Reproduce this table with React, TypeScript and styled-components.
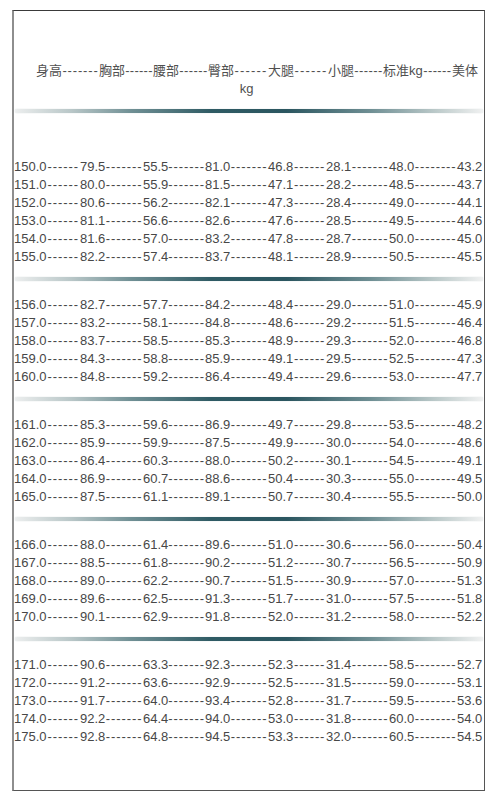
import { createGlobalStyle, styled } from 'styled-components';

type Section = string[][];

const sections: Section[] = [
  [
    ['150.0', '79.5', '55.5', '81.0', '46.8', '28.1', '48.0', '43.2'],
    ['151.0', '80.0', '55.9', '81.5', '47.1', '28.2', '48.5', '43.7'],
    ['152.0', '80.6', '56.2', '82.1', '47.3', '28.4', '49.0', '44.1'],
    ['153.0', '81.1', '56.6', '82.6', '47.6', '28.5', '49.5', '44.6'],
    ['154.0', '81.6', '57.0', '83.2', '47.8', '28.7', '50.0', '45.0'],
    ['155.0', '82.2', '57.4', '83.7', '48.1', '28.9', '50.5', '45.5'],
  ],
  [
    ['156.0', '82.7', '57.7', '84.2', '48.4', '29.0', '51.0', '45.9'],
    ['157.0', '83.2', '58.1', '84.8', '48.6', '29.2', '51.5', '46.4'],
    ['158.0', '83.7', '58.5', '85.3', '48.9', '29.3', '52.0', '46.8'],
    ['159.0', '84.3', '58.8', '85.9', '49.1', '29.5', '52.5', '47.3'],
    ['160.0', '84.8', '59.2', '86.4', '49.4', '29.6', '53.0', '47.7'],
  ],
  [
    ['161.0', '85.3', '59.6', '86.9', '49.7', '29.8', '53.5', '48.2'],
    ['162.0', '85.9', '59.9', '87.5', '49.9', '30.0', '54.0', '48.6'],
    ['163.0', '86.4', '60.3', '88.0', '50.2', '30.1', '54.5', '49.1'],
    ['164.0', '86.9', '60.7', '88.6', '50.4', '30.3', '55.0', '49.5'],
    ['165.0', '87.5', '61.1', '89.1', '50.7', '30.4', '55.5', '50.0'],
  ],
  [
    ['166.0', '88.0', '61.4', '89.6', '51.0', '30.6', '56.0', '50.4'],
    ['167.0', '88.5', '61.8', '90.2', '51.2', '30.7', '56.5', '50.9'],
    ['168.0', '89.0', '62.2', '90.7', '51.5', '30.9', '57.0', '51.3'],
    ['169.0', '89.6', '62.5', '91.3', '51.7', '31.0', '57.5', '51.8'],
    ['170.0', '90.1', '62.9', '91.8', '52.0', '31.2', '58.0', '52.2'],
  ],
  [
    ['171.0', '90.6', '63.3', '92.3', '52.3', '31.4', '58.5', '52.7'],
    ['172.0', '91.2', '63.6', '92.9', '52.5', '31.5', '59.0', '53.1'],
    ['173.0', '91.7', '64.0', '93.4', '52.8', '31.7', '59.5', '53.6'],
    ['174.0', '92.2', '64.4', '94.0', '53.0', '31.8', '60.0', '54.0'],
    ['175.0', '92.8', '64.8', '94.5', '53.3', '32.0', '60.5', '54.5'],
  ],
];

// header labels, how many dashes follow each, and how far apart they are set
const headers = ['身高', '胸部', '腰部', '臀部', '大腿', '小腿', '标准kg', '美体'];
const headerDashes = [7, 6, 6, 6, 6, 6, 6];
const headerSpacing = [0.85, 0.25, 0.4, 1.2, 1.2, 0.4, 0.4];
const rowDashes = [6, 7, 7, 7, 6, 7, 8];

const GlobalStyle = createGlobalStyle`
  body {
    margin: 0;
    background: #fff;
    font-family: "Liberation Sans", "Noto Sans CJK SC", sans-serif;
  }
`;

const Frame = styled.div`
  box-sizing: border-box;
  width: 473px;
  height: 781px;
  margin: 10px 0 0 12px;
  border: 1px solid #555;
  border-top-color: #3a3a3a;
  border-left: 2px solid #8e8e8e;
  background: #fff;
  color: #474747;
  font-size: 13px;
  line-height: 18px;
`;

const Header = styled.div`
  padding-top: 51px;
  color: #505050;
`;

const HeaderLine = styled.div`
  display: grid;
  grid-template-columns: 63px 54px 55px 60px 60px 55px 69px 1fr;
  padding-left: 22px;
`;

const Unit = styled.div`
  text-align: center;
  padding-right: 5px;
`;

const Cell = styled.div`
  display: flex;
  white-space: nowrap;
`;

const Dashes = styled.span<{ $spacing: number }>`
  flex: 1;
  text-align: center;
  letter-spacing: ${(p) => p.$spacing}px;
`;

const Divider = styled.div`
  height: 4px;
  margin: 11px 1px 15px 1px;
  border-radius: 2px;
  background: linear-gradient(
    to right,
    #eceeee 0%,
    #b9c7c8 12%,
    #6f8f94 25%,
    #2f5b64 42%,
    #2b5660 58%,
    #6f8f94 76%,
    #bccaca 90%,
    #f0f1f1 100%
  );
  box-shadow: 0 0 1px rgba(60, 100, 105, 0.35);
`;

const Rows = styled.div<{ $first?: boolean }>`
  padding-top: ${(p) => (p.$first ? '30px' : '0')};
`;

const Row = styled.div`
  display: grid;
  grid-template-columns: 66px 63px 62px 63px 58px 63px 68px 1fr;
`;

const Last = styled.span`
  text-align: right;
  padding-right: 2px;
`;

const App = () => {
  return (
    <>
      <GlobalStyle />
      <Frame>
        <Header>
          <HeaderLine>
            {headers.map((h, i) =>
              i < headers.length - 1 ? (
                <Cell key={h}>
                  <span>{h}</span>
                  <Dashes $spacing={headerSpacing[i]}>{'-'.repeat(headerDashes[i])}</Dashes>
                </Cell>
              ) : (
                <span key={h}>{h}</span>
              )
            )}
          </HeaderLine>
          <Unit>kg</Unit>
        </Header>
        {sections.map((rows, si) => (
          <div key={si}>
            <Divider />
            <Rows $first={si === 0}>
              {rows.map((row) => (
                <Row key={row[0]}>
                  {row.map((v, i) =>
                    i < row.length - 1 ? (
                      <Cell key={i}>
                        <span>{v}</span>
                        <Dashes $spacing={0.9}>{'-'.repeat(rowDashes[i])}</Dashes>
                      </Cell>
                    ) : (
                      <Last key={i}>{v}</Last>
                    )
                  )}
                </Row>
              ))}
            </Rows>
          </div>
        ))}
      </Frame>
    </>
  );
};

export default App;
